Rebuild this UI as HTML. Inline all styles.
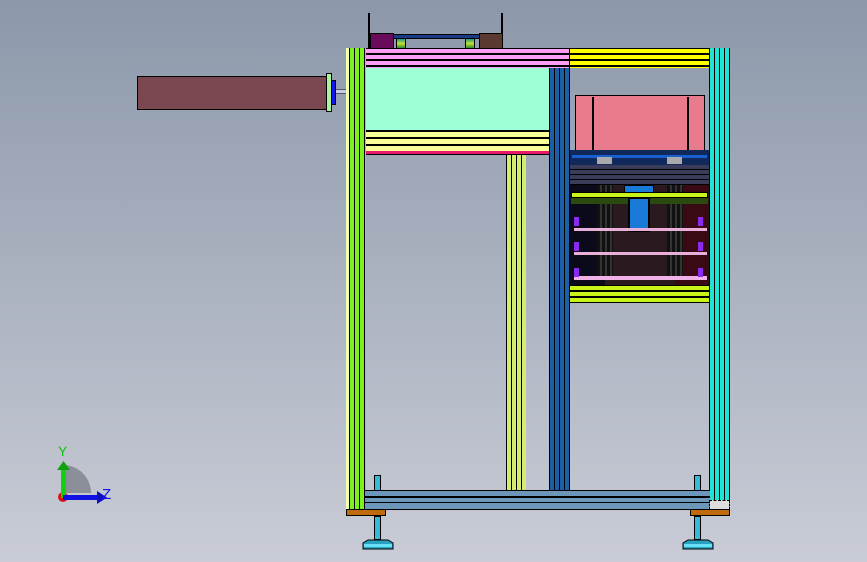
<!DOCTYPE html>
<html><head><style>
*{margin:0;padding:0;box-sizing:border-box}
body{width:867px;height:562px;overflow:hidden;position:relative;background:linear-gradient(#8c98aa,#c9ccd6);font-family:"Liberation Sans",sans-serif}
div{position:absolute}
.k{border:1px solid #000}
</style></head><body>
<div class="k" style="left:137px;top:76px;width:190px;height:34px;background:#7b4750"></div>
<div class="k" style="left:326px;top:73px;width:6px;height:39px;background:#a6f5a0"></div>
<div class="k" style="left:331px;top:80px;width:5px;height:25px;background:#1616e8"></div>
<div style="left:336px;top:89px;width:10px;height:5px;background:#c8cce8;border-top:1px solid #556;border-bottom:1px solid #556"></div>
<div style="left:368px;top:13px;width:2px;height:36px;background:#000"></div>
<div style="left:501px;top:13px;width:2px;height:36px;background:#000"></div>
<div class="k" style="left:370px;top:33px;width:24px;height:16px;background:#6a0a5a"></div>
<div class="k" style="left:479px;top:33px;width:24px;height:16px;background:#5a3a30"></div>
<div class="k" style="left:393px;top:34px;width:87px;height:5px;background:#1a3a88"></div>
<div class="k" style="left:396px;top:38px;width:10px;height:11px;background:linear-gradient(#1a9a8a,#c8e030,#2a8a30)"></div>
<div class="k" style="left:465px;top:38px;width:10px;height:11px;background:linear-gradient(#1a9a8a,#c8e030,#2a8a30)"></div>
<div style="left:365px;top:48px;width:205px;height:20px;background:repeating-linear-gradient(#ff9df5 0 4px,#000 4px 6px);border-top:1px solid #000"></div>
<div style="left:569px;top:48px;width:141px;height:20px;background:repeating-linear-gradient(#ffff00 0 4px,#000 4px 6px);border-top:1px solid #000;border-left:1px solid #000"></div>
<div style="left:365px;top:68px;width:185px;height:62px;background:#9effd6"></div>
<div style="left:365px;top:130px;width:185px;height:22px;background:repeating-linear-gradient(#000 0 2px,#ffff99 2px 7px)"></div>
<div style="left:365px;top:151px;width:185px;height:4px;background:#e8186a;border-bottom:1px solid #000"></div>
<div style="left:506px;top:155px;width:20px;height:336px;background:repeating-linear-gradient(90deg,#000 0 1px,#d4ec70 1px 5px)"></div>
<div style="left:549px;top:68px;width:21px;height:423px;background:repeating-linear-gradient(90deg,#000 0 1px,#1a60a8 1px 5px)"></div>
<div style="left:346px;top:48px;width:20px;height:463px;background:repeating-linear-gradient(90deg,#000 0 1px,#7cf020 1px 5px);border-left:3px solid #f0ffb0"></div>
<div style="left:709px;top:48px;width:21px;height:452px;background:repeating-linear-gradient(90deg,#000 0 1px,#1ee4d4 1px 5px)"></div>
<div class="k" style="left:575px;top:95px;width:130px;height:56px;background:#e87b8c"></div>
<div style="left:592px;top:97px;width:2px;height:54px;background:#000"></div>
<div style="left:687px;top:97px;width:2px;height:54px;background:#000"></div>
<div style="left:570px;top:150px;width:139px;height:15px;background:#10285a"></div>
<div style="left:572px;top:155px;width:135px;height:3px;background:#1a5fd0"></div>
<div style="left:597px;top:157px;width:15px;height:7px;background:#aaa"></div>
<div style="left:667px;top:157px;width:15px;height:7px;background:#aaa"></div>
<div style="left:570px;top:165px;width:139px;height:20px;background:repeating-linear-gradient(#3a3c5a 0 4px,#000 4px 5px)"></div>
<div style="left:570px;top:185px;width:139px;height:100px;background:#2a1a20"></div>
<div style="left:570px;top:185px;width:35px;height:100px;background:#0a0a1a"></div>
<div style="left:675px;top:185px;width:34px;height:100px;background:#3a0a14"></div>
<div style="left:597px;top:185px;width:16px;height:95px;background:repeating-linear-gradient(90deg,#111 0 3px,#333 3px 5px)"></div>
<div style="left:667px;top:185px;width:16px;height:95px;background:repeating-linear-gradient(90deg,#111 0 3px,#333 3px 5px)"></div>
<div class="k" style="left:571px;top:192px;width:137px;height:6px;background:#c8f41a"></div>
<div style="left:571px;top:198px;width:137px;height:6px;background:#2a4a10"></div>
<div class="k" style="left:624px;top:185px;width:30px;height:8px;background:#1a7ad8"></div>
<div class="k" style="left:628px;top:197px;width:22px;height:35px;background:#1a7ad8;border:2px solid #000"></div>
<div style="left:574px;top:228px;width:133px;height:3px;background:#e8b0d8"></div>
<div style="left:574px;top:252px;width:133px;height:3px;background:#e8b0d8"></div>
<div style="left:574px;top:276px;width:133px;height:4px;background:#f0b0e8"></div>
<div style="left:574px;top:217px;width:5px;height:9px;background:#8a2af0"></div>
<div style="left:574px;top:242px;width:5px;height:9px;background:#8a2af0"></div>
<div style="left:574px;top:268px;width:5px;height:9px;background:#8a2af0"></div>
<div style="left:698px;top:217px;width:5px;height:9px;background:#8a2af0"></div>
<div style="left:698px;top:242px;width:5px;height:9px;background:#8a2af0"></div>
<div style="left:698px;top:268px;width:5px;height:9px;background:#8a2af0"></div>
<div style="left:570px;top:285px;width:139px;height:18px;background:repeating-linear-gradient(#c8f41a 0 4px,#000 4px 6px);border-top:1px solid #000"></div>
<div style="left:365px;top:490px;width:345px;height:20px;background:#6c97ba;border-top:1px solid #000;border-bottom:1px solid #000"></div>
<div style="left:365px;top:496px;width:345px;height:1px;background:#000"></div>
<div style="left:365px;top:497px;width:345px;height:1px;background:#000"></div>
<div style="left:365px;top:502px;width:345px;height:1px;background:#000"></div>
<div style="left:709px;top:500px;width:21px;height:10px;background:#ddd;border:1px dashed #000"></div>
<div class="k" style="left:346px;top:509px;width:40px;height:7px;background:#c06a10"></div>
<div class="k" style="left:690px;top:509px;width:40px;height:7px;background:#c06a10"></div>
<div class="k" style="left:374px;top:475px;width:7px;height:16px;background:#3ab8d8"></div>
<div class="k" style="left:374px;top:516px;width:7px;height:24px;background:#3ab8d8"></div>
<svg style="position:absolute;left:362px;top:535px" width="32" height="15"><path d="M1 14 L1 8 L6 5 L26 5 L31 8 L31 14Z" fill="#2aa0c0" stroke="#000"/><rect x="2" y="9" width="28" height="3" fill="#6ae0f8"/></svg>
<div class="k" style="left:694px;top:475px;width:7px;height:16px;background:#3ab8d8"></div>
<div class="k" style="left:694px;top:516px;width:7px;height:24px;background:#3ab8d8"></div>
<svg style="position:absolute;left:682px;top:535px" width="32" height="15"><path d="M1 14 L1 8 L6 5 L26 5 L31 8 L31 14Z" fill="#2aa0c0" stroke="#000"/><rect x="2" y="9" width="28" height="3" fill="#6ae0f8"/></svg>
<svg style="position:absolute;left:45px;top:440px" width="75" height="70">
<path d="M18 25 A28 28 0 0 1 46 53 L18 53Z" fill="#8a8f9a"/>
<circle cx="18" cy="57" r="5" fill="#e01010"/>
<rect x="16" y="28" width="5" height="30" fill="#10d010"/>
<path d="M12 30 L18.5 21 L25 30Z" fill="#10a010"/>
<rect x="18" y="55" width="36" height="5" fill="#1010e0"/>
<path d="M52 51 L62 57.5 L52 64Z" fill="#1010c0"/>
<text x="13" y="16" font-size="14" fill="#10c010" font-family="Liberation Sans">Y</text>
<text x="57" y="59" font-size="15" fill="#1010f0" font-family="Liberation Sans">Z</text>
</svg>
</body></html>
